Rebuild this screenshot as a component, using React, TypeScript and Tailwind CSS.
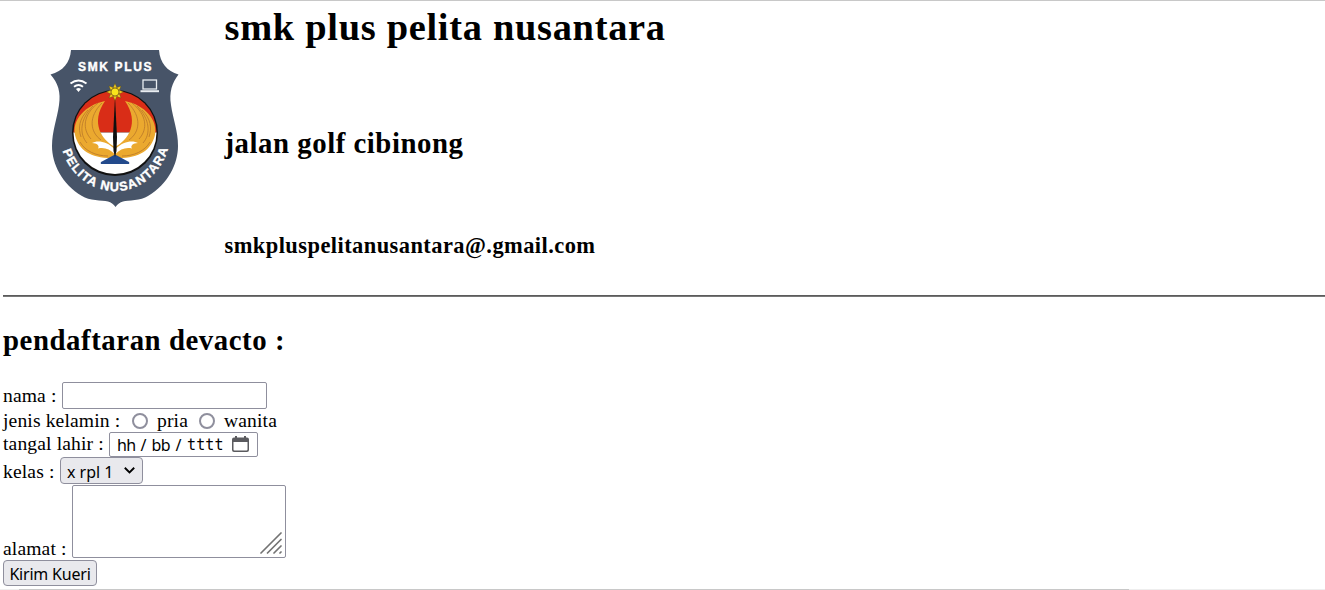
import React from "react";

function SchoolLogo() {
  const rays = [0, 45, 90, 135, 180, 225, 270, 315];
  const wing = (
    <g>
      <path
        d="M65 61 C45 65 32 80 35 95 C39 111 52 119 75 118 L75 107 C62 100 50 83 65 61Z"
        fill="#eba92f"
      />
      <path
        d="M58 63 C43 75 42 89 51 99 M53 66 C40 79 39 94 47 103 M62 63 C48 77 50 92 61 100 M40 102 C45 111 56 116 68 116 M48 70 C39 79 38 88 41 97"
        fill="none"
        stroke="#b9772a"
        strokeWidth="0.8"
      />
      <path
        d="M52 103 C57 100 67 101 74.500 109 L74.500 114 C70 109 64 107 58 108.500 C60 106 57 103 52 103Z"
        fill="#fff"
      />
    </g>
  );
  return (
    <svg className="block h-[175px] w-[150px]" viewBox="0 0 150 175" aria-label="SMK Plus Pelita Nusantara">
      <path
        d="M31 10 H119 C120 23 127 31 138.5 34.5 C132 43 129 52 131 65 C133 79 138 91 138 106 C138 124 128 144 108 156 C101 161 88 160 83 161.500 C80 162.500 77.500 164 75.500 167 C73.500 164 71 162.500 68 161.500 C62 160 49 161 42 156 C22 144 12 124 12 106 C12 91 17 79 19 65 C21 52 18 43 10.5 34.5 C23 31 30 23 31 10Z"
        fill="#475468"
      />
      <circle cx="75" cy="93" r="43" fill="#111" />
      <path d="M33.5 92.5 A41.5 41.5 0 0 1 116.5 92.5Z" fill="#d92d17" />
      <path d="M33.5 92.5 A41.5 41.5 0 0 0 116.5 92.5Z" fill="#fff" />
      {wing}
      <g transform="translate(150 0) scale(-1 1)">{wing}</g>
      <path d="M75 114.500 L89 122 Q90 124 88 124 H62 Q60 124 61 122Z" fill="#234a8c" />
      <path d="M75 57 L77 97 L76.500 111 L75 117 L73.500 111 L73 97Z" fill="#101010" />
      {rays.map((angle) => (
        <path
          key={angle}
          d="M73 48 L75 43.500 L77 48Z"
          fill="#f4cf20"
          stroke="#5b4a10"
          strokeWidth="0.4"
          transform={`rotate(${angle} 75 52)`}
        />
      ))}
      <circle cx="75" cy="52" r="4" fill="#f9e51b" stroke="#80651c" strokeWidth="0.8" />
      <g fill="none" stroke="#fff" strokeWidth="1.9">
        <path d="M30.500 43.500 Q38.500 37.500 46.500 43.500" />
        <path d="M34 46.800 Q38.500 43.200 43 46.800" />
      </g>
      <path d="M36 49 Q38.500 47 41 49 L38.500 52Z" fill="#fff" />
      <rect x="103" y="40" width="13.500" height="9" fill="none" stroke="#e9edf1" strokeWidth="1.3" />
      <path d="M100.500 50.200 H119 V52.200 H100.500Z" fill="#e9edf1" />
      <text
        x="38"
        y="30.500"
        textLength="73.500"
        fill="#fff"
        stroke="#fff"
        strokeWidth="0.4"
        className="font-['Liberation_Sans',sans-serif] text-[12px] font-bold"
      >
        SMK PLUS
      </text>
      <path id="motto-arc" d="M20 93 A55 58 0 0 0 130 93" fill="none" />
      <text
        fill="#fff"
        stroke="#fff"
        strokeWidth="0.4"
        className="font-['Liberation_Sans',sans-serif] text-[12.5px] font-bold"
      >
        <textPath href="#motto-arc" startOffset="18" textLength="143">
          PELITA NUSANTARA
        </textPath>
      </text>
    </svg>
  );
}

function Radio({ label }: { label: string }) {
  return (
    <label className="flex items-center">
      <input
        type="radio"
        name="kelamin"
        className="mr-[9px] size-4 appearance-none rounded-full border-2 border-[#8f8f9d] bg-white"
      />
      {label}
    </label>
  );
}

export default function App() {
  return (
    <main className="flex h-[590px] w-full flex-col overflow-hidden border-t border-[#c8c8c8] bg-white font-['Liberation_Serif',serif] text-[19.6px] leading-[22px] text-black">
      <header className="flex h-[294px] shrink-0 pl-10">
        <div className="w-[184.5px] shrink-0 pt-[39px]">
          <SchoolLogo />
        </div>
        <div className="flex flex-col whitespace-nowrap font-bold">
          <h1 className="mt-1 text-[38.4px] leading-[44px] tracking-[0.71px]">smk plus pelita nusantara</h1>
          <h2 className="mt-[78px] text-[28.8px] leading-[32px] tracking-[0.53px]">jalan golf cibinong</h2>
          <h3 className="mt-[74px] text-[22.46px] leading-[26px] tracking-[0.44px]">smkpluspelitanusantara@.gmail.com</h3>
        </div>
      </header>
      <hr className="ml-[3px] h-[2px] shrink-0 border-t border-b border-t-[#5b5b5b] border-b-[#777777]" />
      <h2 className="mt-[27px] ml-[3px] shrink-0 text-[28.8px] leading-[32px] font-bold tracking-[0.56px]">
        pendaftaran devacto :
      </h2>
      <form className="mt-[26px] flex flex-col pl-[3px] tracking-[0.13px] whitespace-nowrap">
        <label className="flex h-[27px] items-center">
          <span className="w-[59px] pt-px">nama :</span>
          <input className="h-[27px] w-[205px] rounded-[2px] border border-[#8f8f9d] bg-white" />
        </label>
        <div className="flex h-[24px] items-center">
          <span className="w-[129px]">jenis kelamin :</span>
          <span className="mr-[11px]">
            <Radio label="pria" />
          </span>
          <Radio label="wanita" />
        </div>
        <div className="flex h-[24px] items-start">
          <span className="w-[106px]">tangal lahir :</span>
          <div className="-mt-px flex h-[25px] w-[149px] items-center rounded-[2px] border border-[#8f8f9d] bg-white pl-[7px] font-['Noto_Sans',sans-serif] text-[16px]">
            <span className="w-[23.5px] tracking-[-0.6px]">hh</span>
            <span className="w-[11px]">/</span>
            <span className="w-[24px] tracking-[-0.5px]">bb</span>
            <span className="w-[11.5px]">/</span>
            <span className="w-[45px] font-['DejaVu_Sans_Mono',monospace] text-[15px] tracking-[0.1px]">tttt</span>
            <svg className="h-[17px] w-[17px]" viewBox="0 0 17 17" fill="#5b5b5f">
              <path
                d="M3 0 H5 V1.500 H12 V0 H14 V1.500 H15 Q17 1.500 17 3.500 V14 Q17 16 15 16 H2 Q0 16 0 14 V3.500 Q0 1.500 2 1.500 H3Z M1.500 6 V13.500 Q1.500 14.500 2.500 14.500 H14.500 Q15.500 14.500 15.500 13.500 V6Z"
                fillRule="evenodd"
              />
            </svg>
          </div>
        </div>
        <div className="flex h-[27px] items-center">
          <span className="w-[57px] pt-[2px]">kelas :</span>
          <button
            type="button"
            className="flex h-[27px] w-[83px] items-center justify-between rounded-[4px] border border-[#8f8f9d] bg-[#e9e9ed] pr-[7px] pl-[6px] font-['Noto_Sans',sans-serif] text-[16px] tracking-normal"
          >
            <span className="pt-[2px]">x rpl 1</span>
            <svg className="h-[7px] w-[11px]" viewBox="0 0 11 7" fill="none" stroke="#000" strokeWidth="1.9">
              <path d="M0.800 0.800 L5.500 5.400 L10.200 0.800" />
            </svg>
          </button>
        </div>
        <label className="mt-px flex h-[74px] items-end">
          <span className="-mb-px w-[69px]">alamat :</span>
          <span className="mb-px flex h-[73px] w-[214px] items-end justify-end rounded-[2px] border border-[#8f8f9d] pr-[3px] pb-[3px]">
            <svg
              className="h-[22px] w-[22px]"
              viewBox="0 0 22 22"
              stroke="#737373"
              strokeWidth="1.7"
              strokeLinecap="round"
            >
              <path d="M1 21 L21 1 M7.500 21 L21 7.500 M14 21 L21 14 M20 21 L21 20" />
            </svg>
          </span>
        </label>
        <button
          type="submit"
          className="mt-px h-[26px] w-[94px] rounded-[4px] border border-[#8f8f9d] bg-[#e9e9ed] pt-px text-center font-['Noto_Sans',sans-serif] text-[16px] leading-[24px] tracking-[-0.2px]"
        >
          Kirim Kueri
        </button>
      </form>
      <div className="mt-auto flex h-px shrink-0">
        <div className="w-[19px] bg-[#eeeeee]" />
        <div className="w-[1110px] bg-[#c8c8c8]" />
        <div className="flex-1 bg-[#eeeeee]" />
      </div>
    </main>
  );
}
